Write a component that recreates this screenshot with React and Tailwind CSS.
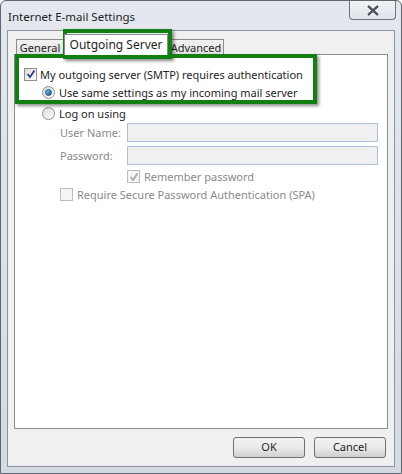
import React from 'react';

const font = { fontFamily: '"Noto Sans", "Open Sans", sans-serif' };

const Check = ({ checked, disabled }) => (
    <span className={`flex items-center justify-center w-[13px] h-[13px] border ${disabled ? 'border-[#bcbcbc] bg-[#f4f4f4]' : 'border-[#8e8f8f] bg-gradient-to-br from-[#dcdcdc] to-white'}`}>
        {checked && (
            <svg width="10" height="10" viewBox="0 0 10 10">
                <path d="M1.5 5 L4 8 L8.5 1.5" fill="none" stroke={disabled ? '#a8a8a8' : '#2d3f8f'} strokeWidth="1.8" />
            </svg>
        )}
    </span>
);

const Radio = ({ checked }) => (
    <span className="flex items-center justify-center w-[13px] h-[13px] rounded-full border border-[#8e8f8f] bg-gradient-to-br from-[#d8d8d8] to-white">
        {checked && <span className="w-[7px] h-[7px] rounded-full bg-gradient-to-br from-[#8fd1f5] to-[#0c4a8a] border border-[#1c5180]" />}
    </span>
);

const Tab = ({ label, active, width }) => (
    <div className={`border border-[#898c95] border-b-0 text-[11px] leading-none flex items-center justify-center ${width} ${active ? 'h-[21px] bg-white -mb-px relative z-10 text-[12px]' : 'h-[15px] bg-gradient-to-b from-[#f2f2f2] to-[#e3e3e3]'}`}>
        {label}
    </div>
);

const App = () => {
    return (
        <div className="w-[402px] h-[474px] bg-gradient-to-b from-[#e4e8ee] via-[#dde2e8] to-[#d4dae2] border border-[#5f6670] rounded-t-[6px] relative text-[#1e1e1e]" style={font}>
            {/* title bar */}
            <div className="h-[29px] flex items-start justify-between pl-[7px]">
                <span className="text-[11.5px] mt-[7px]">Internet E-mail Settings</span>
                <div className="w-[47px] h-[19px] mr-[5px] border border-t-0 border-[#6f747c] rounded-b-[4px] bg-gradient-to-b from-[#f1f3f6] to-[#dfe3e9] flex items-center justify-center">
                    <svg width="14" height="11" viewBox="0 0 14 11">
                        <path d="M2 1 L12 10 M12 1 L2 10" stroke="#ffffff" strokeWidth="4" />
                        <path d="M2 1 L12 10 M12 1 L2 10" stroke="#4c5562" strokeWidth="2.4" />
                    </svg>
                </div>
            </div>

            {/* client area */}
            <div className="mx-[6px] h-[437px] bg-[#f0f0f0] border border-[#8d939c] flex flex-col">
                <div className="flex items-end pl-[8px] h-[23px]">
                    <Tab label="General" width="w-[48px]" />
                    <Tab label="Outgoing Server" active width="w-[104px]" />
                    <Tab label="Advanced" width="w-[56px]" />
                </div>
                <div className="mx-[6px] h-[375px] bg-white border border-[#898c95] pl-[9px] pt-[12px] text-[11px] leading-none">
                    <div className="flex items-center gap-[3px] h-[14px]">
                        <Check checked />
                        <span>My outgoing server (SMTP) requires authentication</span>
                    </div>
                    <div className="flex items-center gap-[4px] h-[14px] mt-[4px] ml-[18px]">
                        <Radio checked />
                        <span>Use same settings as my incoming mail server</span>
                    </div>
                    <div className="flex items-center gap-[4px] h-[14px] mt-[7px] ml-[18px]">
                        <Radio />
                        <span>Log on using</span>
                    </div>
                    <div className="ml-[36px] mt-[3px] text-[#8a8a8a] flex flex-col">
                        <div className="flex items-center h-[19px]">
                            <span className="w-[67px]">User Name:</span>
                            <div className="w-[251px] h-[19px] bg-[#f0f0f0] border border-[#abbfd8]" />
                        </div>
                        <div className="flex items-center h-[19px] mt-[4px]">
                            <span className="w-[67px]">Password:</span>
                            <div className="w-[251px] h-[19px] bg-[#f0f0f0] border border-[#abbfd8]" />
                        </div>
                        <div className="flex items-center gap-[4px] h-[13px] ml-[67px] mt-[5px]">
                            <Check checked disabled />
                            <span>Remember password</span>
                        </div>
                        <div className="flex items-center gap-[4px] h-[13px] mt-[5px]">
                            <Check disabled />
                            <span>Require Secure Password Authentication (SPA)</span>
                        </div>
                    </div>
                </div>
                <div className="flex justify-end gap-[9px] pr-[8px] mt-[8px]">
                    <button className="w-[72px] h-[21px] text-[11px] rounded-[3px] border border-[#707070] bg-gradient-to-b from-[#f2f2f2] via-[#ebebeb] to-[#cfcfcf]">OK</button>
                    <button className="w-[72px] h-[21px] text-[11px] rounded-[3px] border border-[#707070] bg-gradient-to-b from-[#f2f2f2] via-[#ebebeb] to-[#cfcfcf]">Cancel</button>
                </div>
            </div>

            {/* annotation highlights */}
            <div className="absolute left-[62px] top-[28px] w-[109px] h-[30px] border-[4px] border-[#127f12] shadow-[2px_2px_3px_rgba(0,0,0,0.45)] pointer-events-none" />
            <div className="absolute left-[14px] top-[53px] w-[302px] h-[50px] border-[4px] border-[#127f12] shadow-[2px_2px_3px_rgba(0,0,0,0.45)] pointer-events-none" />
        </div>
    );
};

export default App;
